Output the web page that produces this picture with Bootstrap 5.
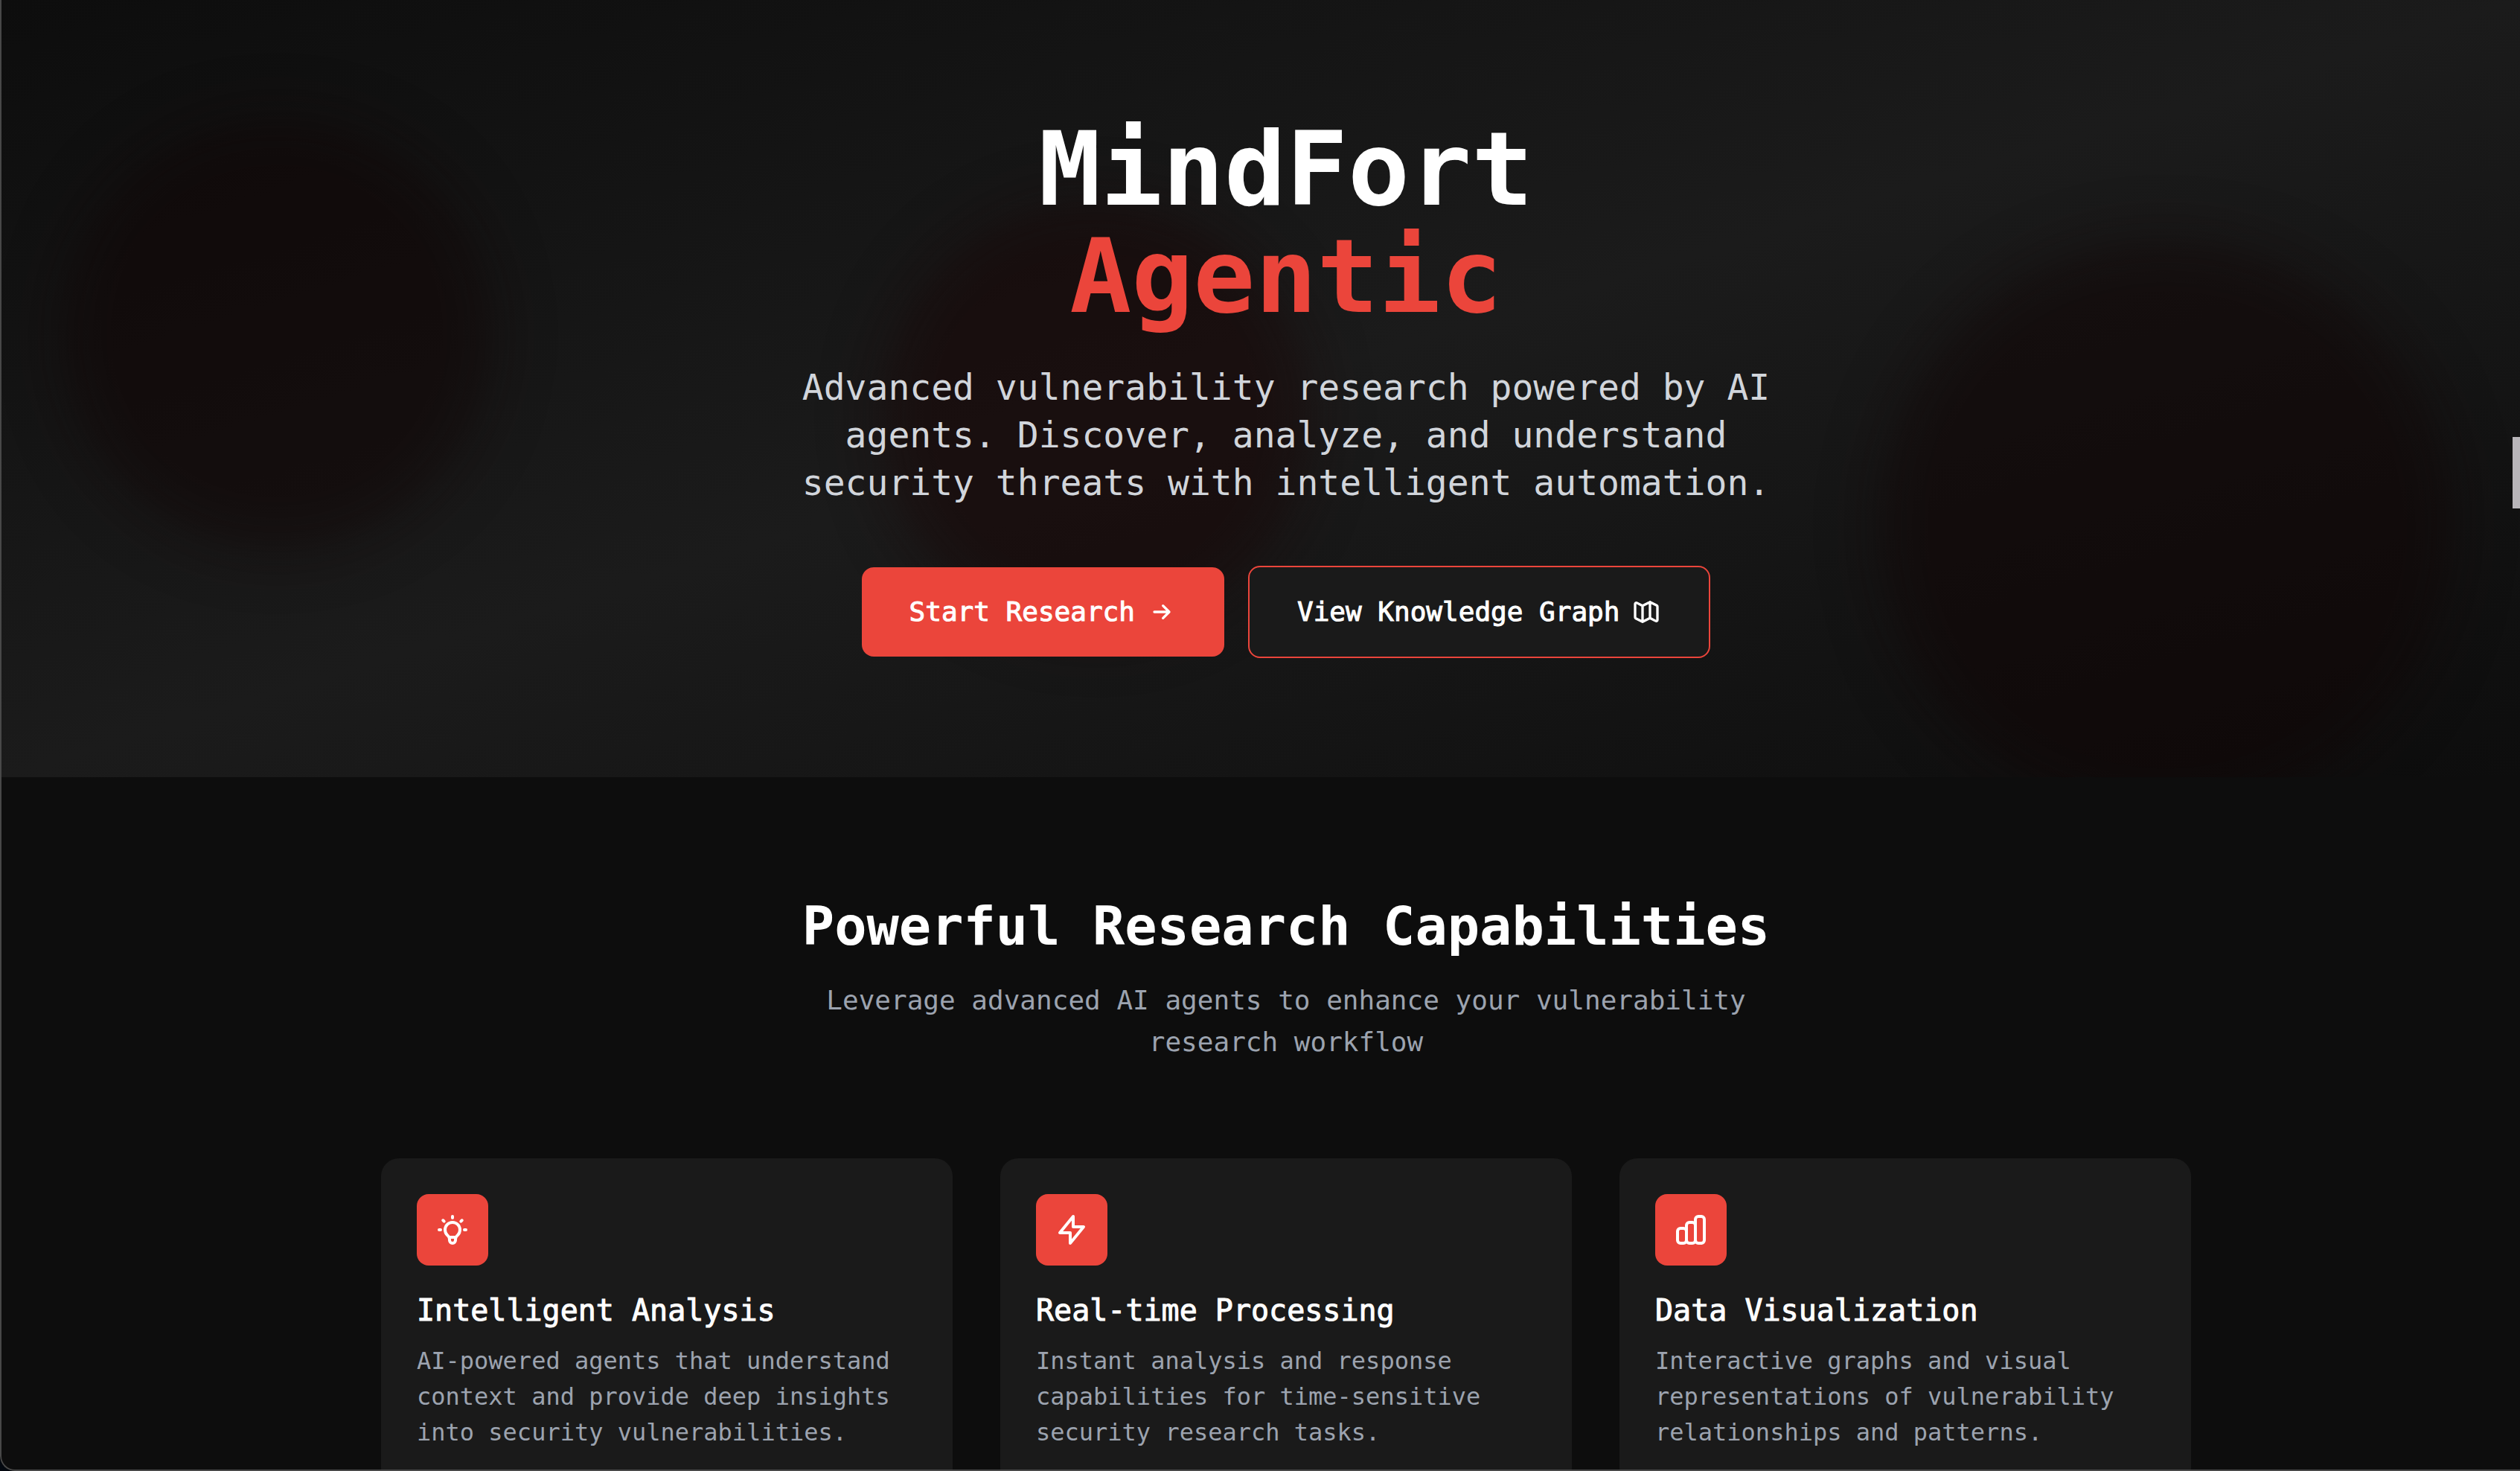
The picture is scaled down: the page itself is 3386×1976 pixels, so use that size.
<!DOCTYPE html>
<html lang="en" data-bs-theme="dark">
<head>
<meta charset="utf-8">
<meta name="viewport" content="width=device-width, initial-scale=1">
<title>MindFort Agentic</title>
<link href="https://cdn.jsdelivr.net/npm/bootstrap@5.3.0/dist/css/bootstrap.min.css" rel="stylesheet">
<style>
:root { --brand: #eb453b; --ink: #0d0d0d; --panel: #1a1a1a; --body-mono: "DejaVu Sans Mono", "Liberation Mono", monospace; }
body { margin: 0; background: #03080f; font-family: var(--body-mono); color: #fff; }
.shell { height: 100vh; background: var(--ink); border-bottom-left-radius: 20px; }
.shell-frame { inset: 0; border: solid #484848; border-width: 0 0 2px 2px; border-bottom-left-radius: 20px; pointer-events: none; z-index: 5; }
.hero { padding: 156px 0 160px 70px; background: linear-gradient(to bottom right, #0d0d0d, #1b1b1b, #0d0d0d); }
.glow { border-radius: 50%; filter: blur(40px); background: rgba(16, 3, 3, .5); }
.glow-a { width: 576px; height: 576px; left: 84px; top: 160px; }
.glow-b { width: 768px; height: 768px; right: 92px; top: 324px; }
.glow-c { width: 576px; height: 576px; left: 1184px; top: 272px; background: rgba(24, 3, 3, .5); }
.hero-title { font-size: 138px; line-height: 144px; margin-bottom: 44px; }
.accent { color: var(--brand); }
.measure { max-width: 1344px; }
.hero-lead { font-size: 48px; line-height: 64px; color: #d1d5db; margin-bottom: 80px; }
.hero-actions { gap: 32px; }
.cta { font-size: 36px; line-height: 56px; padding: 32px 64px; border-radius: 16px; color: #fff; gap: 16px; -webkit-text-stroke: 1px currentColor; }
.cta svg { width: 40px; height: 40px; }
.cta-fill, .cta-fill:hover { background: var(--brand); border: 0; color: #fff; }
.cta-line, .cta-line:hover { background: var(--panel); border: 2px solid var(--brand); color: #fff; }
.features { padding: 160px 0 160px 70px; }
.features-title { font-size: 72px; line-height: 80px; margin-bottom: 32px; }
.features-sub { font-size: 36px; line-height: 56px; color: #9ca3af; margin-bottom: 128px; }
.features-wrap { max-width: 2432px; }
.features-wrap .row { --bs-gutter-x: 64px; }
.feature { background: var(--panel); border: 0; border-radius: 24px; }
.feature .card-body { padding: 48px; }
.feature-icon { width: 96px; height: 96px; border-radius: 16px; background: var(--brand); margin-bottom: 32px; }
.feature-icon svg { width: 48px; height: 48px; }
.feature-name { font-size: 40px; line-height: 56px; margin-bottom: 16px; -webkit-text-stroke: 1px currentColor; }
.feature-text { font-size: 32px; line-height: 48px; color: #9ca3af; }
.thumb { width: 10px; height: 96px; right: 0; top: 587px; background: #b8b5b9; z-index: 6; }
svg { fill: none; stroke: currentColor; stroke-width: 2; stroke-linecap: round; stroke-linejoin: round; }
</style>
</head>
<body>
<main class="shell position-relative overflow-hidden">
  <div class="shell-frame position-absolute"></div>
  <div class="thumb position-absolute"></div>
  <section class="hero position-relative overflow-hidden text-center">
    <div class="glow glow-a position-absolute"></div>
    <div class="glow glow-b position-absolute"></div>
    <div class="glow glow-c position-absolute"></div>
    <div class="position-relative">
      <h1 class="hero-title fw-bold">MindFort<span class="accent d-block">Agentic</span></h1>
      <p class="hero-lead measure mx-auto">Advanced vulnerability research powered by AI agents. Discover, analyze, and understand security threats with intelligent automation.</p>
      <div class="hero-actions d-flex justify-content-center align-items-center">
        <a href="#research" class="btn cta cta-fill d-inline-flex align-items-center">Start Research
          <svg viewBox="0 0 24 24" aria-hidden="true"><path d="M6 12h12M13 7l5 5-5 5"/></svg>
        </a>
        <a href="#graph" class="btn cta cta-line d-inline-flex align-items-center">View Knowledge Graph
          <svg viewBox="0 0 24 24" aria-hidden="true"><path d="M9 20l-5.447-2.724A1 1 0 013 16.382V5.618a1 1 0 011.447-.894L9 7m0 13l6-3m-6 3V7m6 10l4.553 2.276A1 1 0 0021 18.382V7.618a1 1 0 00-.553-.894L15 4m0 13V4m0 0L9 7"/></svg>
        </a>
      </div>
    </div>
  </section>
  <section class="features">
    <div class="text-center">
      <h2 class="features-title fw-bold">Powerful Research Capabilities</h2>
      <p class="features-sub measure mx-auto">Leverage advanced AI agents to enhance your vulnerability research workflow</p>
    </div>
    <div class="features-wrap mx-auto">
      <div class="row row-cols-3 gy-0">
        <div class="col">
          <article class="card feature h-100"><div class="card-body">
            <div class="feature-icon d-flex align-items-center justify-content-center">
              <svg viewBox="0 0 24 24" aria-hidden="true"><path d="M9.663 17h4.673M12 3v1m6.364 1.636l-.707.707M21 12h-1M4 12H3m3.343-5.657l-.707-.707m2.828 9.900a5 5 0 117.072 0l-.548.547A3.374 3.374 0 0014 18.469V19a2 2 0 11-4 0v-.531c0-.895-.356-1.754-.988-2.386l-.548-.547z"/></svg>
            </div>
            <h3 class="feature-name fw-normal">Intelligent Analysis</h3>
            <p class="feature-text mb-0">AI-powered agents that understand context and provide deep insights into security vulnerabilities.</p>
          </div></article>
        </div>
        <div class="col">
          <article class="card feature h-100"><div class="card-body">
            <div class="feature-icon d-flex align-items-center justify-content-center">
              <svg viewBox="0 0 24 24" aria-hidden="true"><path d="M13 10V3L4 14h7v7l9-11h-7z"/></svg>
            </div>
            <h3 class="feature-name fw-normal">Real-time Processing</h3>
            <p class="feature-text mb-0">Instant analysis and response capabilities for time-sensitive security research tasks.</p>
          </div></article>
        </div>
        <div class="col">
          <article class="card feature h-100"><div class="card-body">
            <div class="feature-icon d-flex align-items-center justify-content-center">
              <svg viewBox="0 0 24 24" aria-hidden="true"><path d="M9 19v-6a2 2 0 00-2-2H5a2 2 0 00-2 2v6a2 2 0 002 2h2a2 2 0 002-2zm0 0V9a2 2 0 012-2h2a2 2 0 012 2v10m-6 0a2 2 0 002 2h2a2 2 0 002-2m0 0V5a2 2 0 012-2h2a2 2 0 012 2v14a2 2 0 01-2 2h-2a2 2 0 01-2-2z"/></svg>
            </div>
            <h3 class="feature-name fw-normal">Data Visualization</h3>
            <p class="feature-text mb-0">Interactive graphs and visual representations of vulnerability relationships and patterns.</p>
          </div></article>
        </div>
      </div>
    </div>
  </section>
</main>
<script src="https://cdn.jsdelivr.net/npm/bootstrap@5.3.0/dist/js/bootstrap.bundle.min.js"></script>
</body>
</html>
